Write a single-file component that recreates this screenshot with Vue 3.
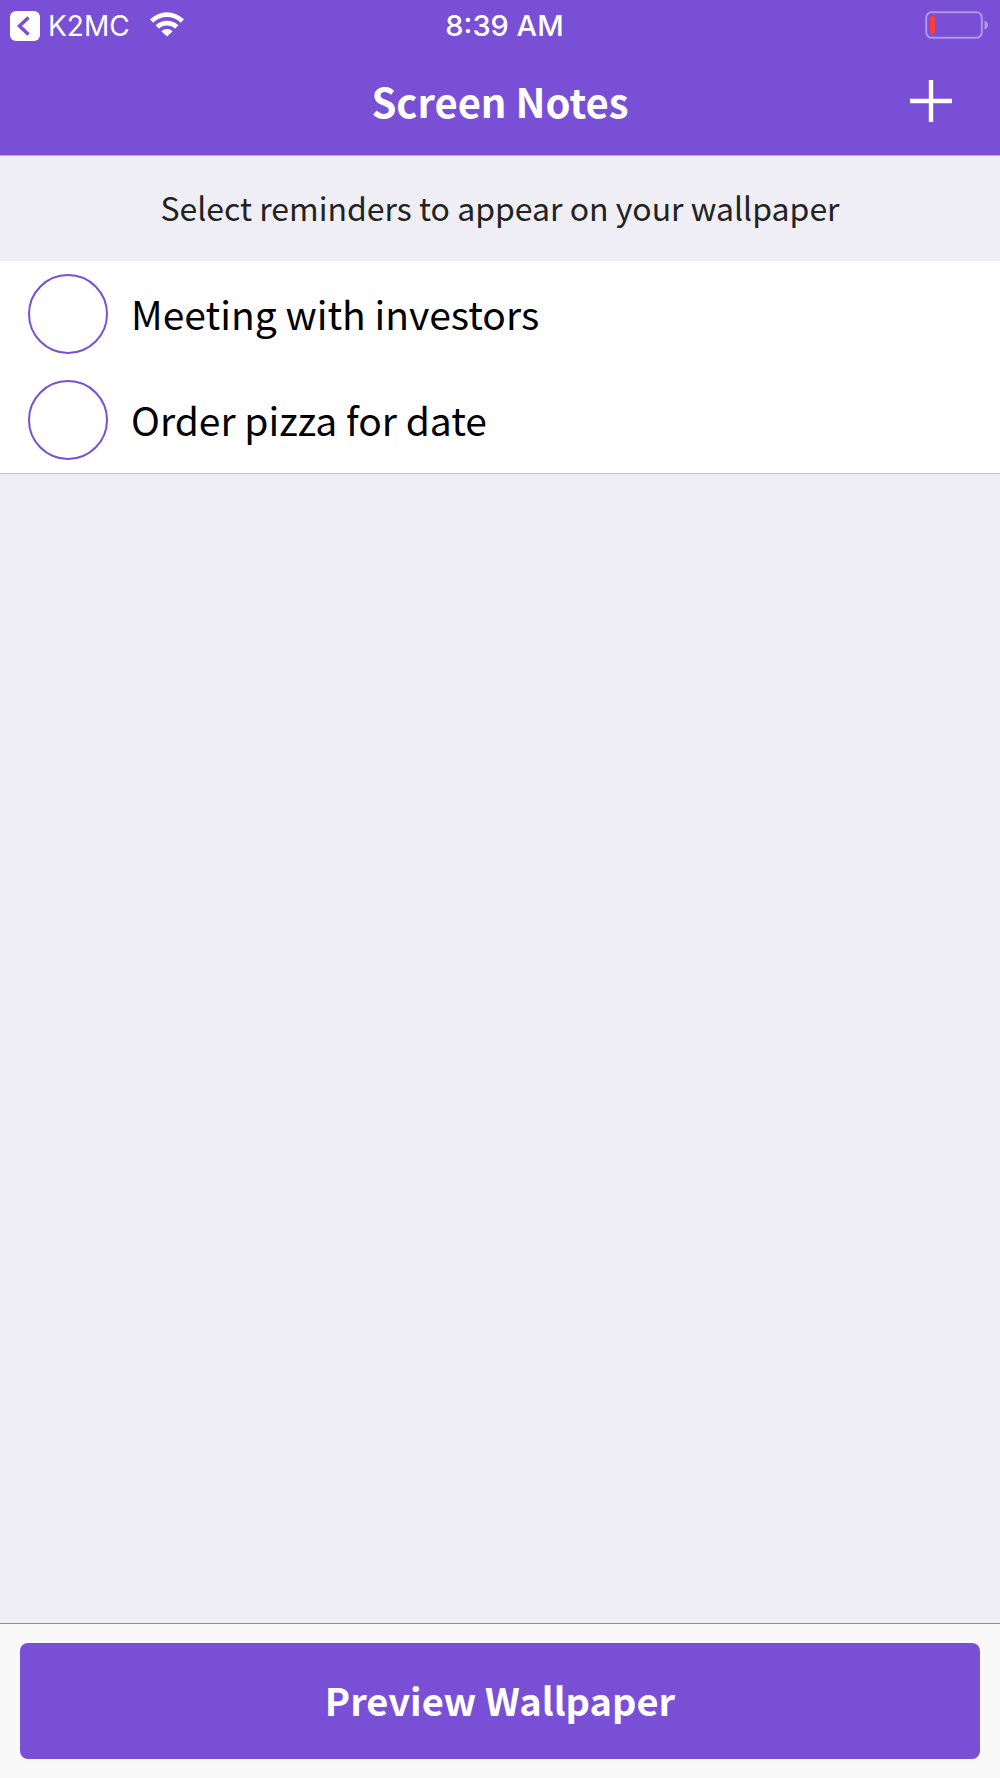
<script setup>
import { ref } from 'vue'

const reminders = ref([
  { id: 1, text: 'Meeting with investors', selected: false },
  { id: 2, text: 'Order pizza for date', selected: false }
])
</script>

<template>
  <div class="screen">
    <header class="header">
      <div class="status">
        <div class="status-left">
          <a class="back" href="#">
            <svg width="30" height="30" viewBox="0 0 30 30" aria-hidden="true">
              <rect width="30" height="30" rx="6" fill="#fff" />
              <path d="M18.500 6.500 9.500 15l9 8.500" fill="none" stroke="#784fd5" stroke-width="3.500" />
            </svg>
            <span>K2MC</span>
          </a>
          <svg width="34" height="25" viewBox="0 0 34 25" role="img" aria-label="Wi-Fi">
            <path d="M0 7.300a24.300 24.300 0 0 1 34 0l-3.200 3.500a19.500 19.500 0 0 0-27.600 0z" fill="#fff" />
            <path d="M5.600 13.200a16.500 16.500 0 0 1 22.800 0l-3.300 3.500a11.800 11.800 0 0 0-16.200 0z" fill="#fff" />
            <path d="M11.300 19.200a8.500 8.500 0 0 1 11.400 0l-5.700 5.300z" fill="#fff" />
          </svg>
        </div>
        <time class="clock">8:39 AM</time>
        <svg class="battery" width="64" height="28" viewBox="0 0 64 28" role="img" aria-label="Battery low">
          <rect x="1.200" y="1.200" width="55.600" height="25.600" rx="5.500" fill="none" stroke="#b196e8" stroke-width="2" />
          <rect x="5" y="5" width="5" height="18" rx="2" fill="#fc3d39" />
          <path d="M59.500 9.500q3.500 1.500 3.500 4.500t-3.500 4.500z" fill="#b196e8" />
        </svg>
      </div>
      <div class="nav">
        <h1>Screen Notes</h1>
        <button class="add" type="button" aria-label="Add reminder">
          <svg width="42" height="42" viewBox="0 0 42 42" aria-hidden="true">
            <path d="M21 0v42M0 21h42" stroke="#fff" stroke-width="4.400" />
          </svg>
        </button>
      </div>
    </header>

    <main class="content">
      <p class="intro">Select reminders to appear on your wallpaper</p>
      <ul class="list">
        <li v-for="item in reminders" :key="item.id">
          <label class="row">
            <input v-model="item.selected" type="checkbox" />
            <span>{{ item.text }}</span>
          </label>
        </li>
      </ul>
    </main>

    <footer class="footer">
      <button class="preview" type="button">Preview Wallpaper</button>
    </footer>
  </div>
</template>

<style>
body {
  margin: 0;
}
</style>

<style scoped>
* {
  box-sizing: border-box;
}

.screen {
  display: flex;
  flex-direction: column;
  min-height: 100vh;
  background: #efeef4;
  color: #000;
  font-family: "Noto Sans CJK SC", sans-serif;
}

.header {
  background: #784fd5;
  border-bottom: 1px solid #b9aed0;
  color: #fff;
}

.status {
  display: grid;
  grid-template-columns: 1fr auto 1fr;
  align-items: center;
  height: 52px;
  padding: 0 11px 0 10px;
  font-family: Inter, sans-serif;
  font-size: 28px;
}

.status-left {
  display: flex;
  align-items: center;
  gap: 20px;
}

.back {
  display: flex;
  align-items: center;
  gap: 8px;
  color: #fff;
  text-decoration: none;
}

.status-left > svg {
  margin-bottom: 3px;
}

.clock {
  padding: 0 0 2px 10px;
  font-size: 29px;
  font-weight: 500;
}

.battery {
  justify-self: end;
  margin-bottom: 3px;
}

.nav {
  display: grid;
  grid-template-columns: 1fr auto 1fr;
  align-items: center;
  height: 103px;
  padding: 0 48px 6px;
}

h1 {
  grid-column: 2;
  margin: 0;
  font-size: 40px;
  line-height: 60px;
  font-weight: 700;
}

.add {
  justify-self: end;
  display: flex;
  padding: 0;
  border: 0;
  background: none;
}

.intro {
  margin: 0;
  padding: 27px 16px 29px;
  color: #222;
  font-size: 32px;
  line-height: 49px;
  text-align: center;
}

.content {
  flex: 1;
}

.list {
  margin: 0;
  padding: 0;
  border-bottom: 1px solid #c8c7cc;
  background: #fff;
  list-style: none;
}

.row {
  display: flex;
  align-items: center;
  gap: 23px;
  height: 106px;
  padding: 0 28px;
  font-size: 39px;
}

.row span {
  padding-bottom: 2px;
}

.row input {
  appearance: none;
  flex: none;
  width: 80px;
  height: 80px;
  margin: 0;
  border: 2px solid #784fd5;
  border-radius: 50%;
}

.row input:checked {
  background: #784fd5;
}

.footer {
  padding: 19px 20px;
  border-top: 1px solid #8e8e93;
  background: #f9f9f9;
}

.preview {
  width: 100%;
  height: 116px;
  padding: 0 0 4px;
  border: 0;
  border-radius: 8px;
  background: #784fd5;
  color: #fff;
  font-family: inherit;
  font-size: 38px;
  font-weight: 700;
}
</style>
